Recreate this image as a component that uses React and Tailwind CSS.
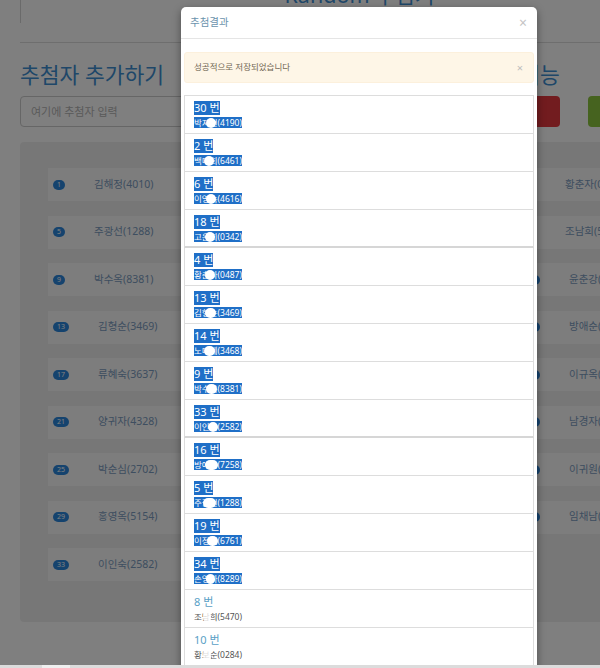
import React from 'react'

// 추첨 대상자 (번호, 이름, 코드)
const people = [
  [1, '김해정', '4010'], [2, '백미희', '6461'], [3, '정말순', '2231'], [4, '황춘자', '0487'],
  [5, '주광선', '1288'], [6, '이영숙', '4616'], [7, '최순자', '5093'], [8, '조남희', '5470'],
  [9, '박수옥', '8381'], [10, '황보순', '0284'], [11, '김옥분', '7712'], [12, '윤춘강', '3325'],
  [13, '김형순', '3469'], [14, '노미례', '3468'], [15, '장정희', '1847'], [16, '방애순', '7258'],
  [17, '류혜숙', '3637'], [18, '고은희', '0342'], [19, '이정애', '6761'], [20, '이규옥', '4409'],
  [21, '양귀자', '4328'], [22, '서말녀', '9015'], [23, '한복순', '6620'], [24, '남경자', '2274'],
  [25, '박순심', '2702'], [26, '오영희', '5581'], [27, '신금자', '3196'], [28, '이귀원', '8843'],
  [29, '홍영옥', '5154'], [30, '박지현', '4190'], [31, '문정숙', '7027'], [32, '임채남', '1650'],
  [33, '이인숙', '2582'], [34, '손영자', '8289'],
]

// 추첨 결과 순서, blob = 이름 가림 위치
const picks = [
  { no: 30, blob: 12, w: 10, sel: true },
  { no: 2, blob: 10, w: 10, sel: true },
  { no: 6, blob: 12, w: 10, sel: true },
  { no: 18, blob: 11, w: 10, sel: true, sep: true },
  { no: 4, blob: 11, w: 10, sel: true },
  { no: 13, blob: 11, w: 11, sel: true },
  { no: 14, blob: 10, w: 11, sel: true },
  { no: 9, blob: 12, w: 11, sel: true },
  { no: 33, blob: 14, w: 10, sel: true, sep: true },
  { no: 16, blob: 11, w: 13, sel: true },
  { no: 5, blob: 9, w: 13, sel: true },
  { no: 19, blob: 13, w: 11, sel: true },
  { no: 34, blob: 12, w: 9, sel: true },
  { no: 8, blob: 9, w: 8, faint: true },
  { no: 10, blob: 9, w: 8, faint: true },
  { no: 25, blob: 10, w: 9, faint: true },
]

const byNo = Object.fromEntries(people.map(p => [p[0], p]))

export default function App() {
  return (
    <div className="relative w-[600px] h-[668px] overflow-hidden bg-white font-['Noto_Sans','Noto_Sans_CJK_KR',sans-serif]">
      <div className="w-[718px] px-[20px] -mt-[40px]">
        <div className="h-[63px] border-l border-[#d4d4d4] pt-[20px] text-center">
          <h1 className="text-[21.5px] leading-[30px] text-[#3f8fd2]">Random 추첨기</h1>
        </div>
        <hr className="mt-[19px] border-t border-[#dddddd]" />

        <div className="mt-[17px] flex gap-[35px]">
          <div className="w-[420px]">
            <h2 className="text-[21.5px] leading-[30px] text-[#3f8fd2]">추첨자 추가하기</h2>
            <input
              className="mt-[6px] w-full h-[31px] px-[10px] rounded-[4px] border border-[#cccccc] bg-white text-[11px] placeholder:text-[#b4b4b4]"
              placeholder="여기에 추첨자 입력"
            />
          </div>
          <div>
            <h2 className="text-[21.5px] leading-[30px] text-[#3f8fd2] whitespace-nowrap">추첨 기능</h2>
            <div className="mt-[6px] -ml-[8px] flex gap-[28px]">
              <button className="w-[93px] h-[31px] rounded-[4px] bg-[#e4393e] text-white text-[11px]">전체 삭제</button>
              <button className="w-[110px] h-[31px] rounded-[4px] bg-[#8cc63e] text-white text-[11px]">추첨 시작</button>
            </div>
          </div>
        </div>

        <div className="mt-[15px] rounded-[4px] bg-[#efefef] pt-[26px] pl-[28px] pb-[41px]">
          <div className="grid grid-cols-[repeat(4,147px)] gap-x-[10px] gap-y-[14.5px]">
            {people.map(([no, name, code]) => (
              <div key={no} className="h-[33px] flex items-center pl-[5px] bg-[#fafafa]">
                <span className="h-[10px] px-[4px] rounded-full bg-[#2b86dc] text-white text-[7px] leading-[10px]">{no}</span>
                <span className="ml-[29px] text-[10.5px] text-[#7c9cc0] whitespace-nowrap">{name}({code})</span>
              </div>
            ))}
          </div>
        </div>
      </div>

      <div className="absolute inset-0 bg-black/50" />

      <div className="absolute left-[181px] top-[7px] w-[356px] rounded-[5px] bg-white shadow-[0_3px_9px_rgba(0,0,0,0.4)]">
        <div className="h-[32px] px-[9px] flex items-center justify-between border-b border-[#e5e5e5]">
          <span className="text-[10.5px] text-[#6b93ad]">추첨결과</span>
          <span className="text-[14px] leading-none text-[#c4c4c4] mr-[1px]">×</span>
        </div>
        <div className="pt-[13px] px-[3px]">
          <div className="h-[31px] px-[9px] pr-[10px] flex items-center justify-between rounded-[3px] bg-[#fef6e7] border border-[#fcf0dc]">
            <span className="text-[8.5px] text-[#6f6552]">성공적으로 저장되었습니다</span>
            <span className="text-[11px] leading-none text-[#bdbdbd]">×</span>
          </div>
          <div className="mt-[12px] border-t border-[#dddddd]">
            {picks.map(p => (
              <Pick key={p.no} {...p} />
            ))}
          </div>
        </div>
      </div>

      {/* 가로 스크롤바 */}
      <div className="absolute left-0 right-0 bottom-0 h-[3px] bg-[#dcdcdc]">
        <div className="ml-[42px] w-[28px] h-full bg-[#efefef]" />
      </div>
    </div>
  )
}

function Pick({ no, blob, w, sel, sep, faint }) {
  const [, name, code] = byNo[no]
  return (
    <div className={`h-[38px] px-[9px] pt-[5px] border-x border-[#dddddd] ${sep ? 'border-b-2 border-b-[#d6d6d6]' : 'border-b border-b-[#dddddd]'}`}>
      <div className="flex h-[14px]">
        <span className={`h-[14px] leading-[14px] text-[11px] ${sel ? 'bg-[#1f6fc7] text-white' : 'text-[#5a9fc6]'}`}>{no} 번</span>
      </div>
      <div className="mt-[2px] flex h-[11px]">
        <span className={`relative h-[11px] leading-[11px] text-[8.5px] ${sel ? 'bg-[#1f6fc7] text-white' : 'text-[#555555]'}`}>
          {name}({code})
          <span
            className={`absolute top-[1px] h-[10px] rounded-full ${faint ? 'bg-white/80' : 'bg-white'}`}
            style={{ left: blob, width: w }}
          />
        </span>
      </div>
    </div>
  )
}
